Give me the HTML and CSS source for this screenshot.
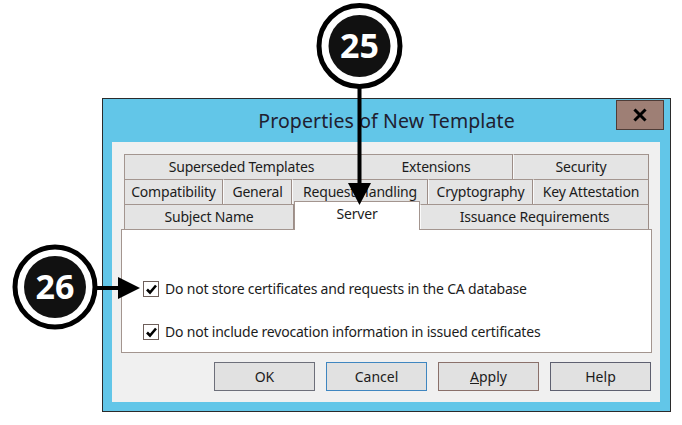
FILE: index.html
```html
<!DOCTYPE html>
<html>
<head>
<meta charset="utf-8">
<link rel="stylesheet" href="styles.css">
</head>
<body>
<div class="stage">
  <div class="window">
    <div class="titlebar">
      <div class="spacer"></div>
      <div class="title">Properties of New Template</div>
      <div class="close-wrap">
        <div class="close">
          <svg width="14" height="14" viewBox="0 0 14 14"><path d="M2.5 2.5 L11.5 11.5 M11.5 2.5 L2.5 11.5" stroke="#000" stroke-width="3" stroke-linecap="square"/></svg>
        </div>
      </div>
    </div>
    <div class="client">
      <div class="tabs">
        <div class="tabrow">
          <div class="tab t-superseded">Superseded Templates</div>
          <div class="tab t-extensions">Extensions</div>
          <div class="tab t-security">Security</div>
        </div>
        <div class="tabrow">
          <div class="tab t-compat">Compatibility</div>
          <div class="tab t-general">General</div>
          <div class="tab t-request">Request Handling</div>
          <div class="tab t-crypto">Cryptography</div>
          <div class="tab t-key">Key Attestation</div>
        </div>
        <div class="tabrow front">
          <div class="tab t-subject">Subject Name</div>
          <div class="tab t-server selected">Server</div>
          <div class="tab t-issuance">Issuance Requirements</div>
        </div>
      </div>
      <div class="panel">
        <label class="check">
          <span class="box"><svg width="13" height="13" viewBox="0 0 13 13"><path d="M2 6.5 L5 9.5 L11 2.5" fill="none" stroke="#000" stroke-width="2.6"/></svg></span>
          <span class="label">Do not store certificates and requests in the CA database</span>
        </label>
        <label class="check">
          <span class="box"><svg width="13" height="13" viewBox="0 0 13 13"><path d="M2 6.5 L5 9.5 L11 2.5" fill="none" stroke="#000" stroke-width="2.6"/></svg></span>
          <span class="label">Do not include revocation information in issued certificates</span>
        </label>
      </div>
      <div class="buttons">
        <div class="btn b-ok">OK</div>
        <div class="btn b-cancel">Cancel</div>
        <div class="btn b-apply"><u>A</u>pply</div>
        <div class="btn b-help">Help</div>
      </div>
    </div>
  </div>
  <svg class="overlay" width="682" height="425" viewBox="0 0 682 425">
    <rect x="357.5" y="86" width="4" height="100" fill="#000"/>
    <polygon points="348,183 371,183 359.5,205" fill="#000"/>
    <circle cx="359.5" cy="46" r="40.5" fill="#fff" stroke="#000" stroke-width="5"/>
    <circle cx="359.5" cy="46" r="31" fill="#111"/>
    <text x="359.5" y="58" class="num">25</text>
    <rect x="95" y="286" width="26" height="4" fill="#000"/>
    <polygon points="118,277 118,299 140,288" fill="#000"/>
    <circle cx="55" cy="287" r="40" fill="#fff" stroke="#000" stroke-width="5"/>
    <circle cx="55" cy="287" r="31" fill="#111"/>
    <text x="55" y="299" class="num">26</text>
  </svg>
</div>
</body>
</html>
```
FILE: styles.css
```css
html, body {
  margin: 0;
  padding: 0;
  background: #fff;
}
.stage {
  position: relative;
  width: 682px;
  height: 425px;
  overflow: hidden;
  font-family: "Noto Sans", "Open Sans", sans-serif;
  color: #1c1c1c;
}
.window {
  margin-left: 102px;
  margin-top: 98px;
  width: 569px;
  height: 314px;
  box-sizing: border-box;
  border: 1px solid #2b2b2b;
  background: #62c6e8;
  padding: 0 10px 9px 9px;
  display: flex;
  flex-direction: column;
}
.titlebar {
  height: 43px;
  display: grid;
  grid-template-columns: 1fr auto 1fr;
  margin: 0 -10px 0 -9px;
}
.title {
  font-size: 19.5px;
  line-height: 43px;
  color: #202030;
  letter-spacing: 0.1px;
}
.close-wrap {
  display: flex;
  justify-content: flex-end;
  align-items: flex-start;
  padding: 1px 6px 0 0;
}
.close {
  width: 48px;
  height: 30px;
  box-sizing: border-box;
  background: #9e7f75;
  border: 1px solid #4e3c37;
  display: flex;
  align-items: center;
  justify-content: center;
}
.client {
  flex: 1;
  background: #f0f0f0;
  padding: 12px 8px 0 9px;
  display: flex;
  flex-direction: column;
}
.tabs {
  margin-left: 3px;
  width: 525px;
  display: flex;
  flex-direction: column;
  position: relative;
  z-index: 1;
}
.tabrow {
  display: flex;
  height: 25px;
}
.tab {
  box-sizing: border-box;
  height: 25px;
  background: #e4e4e4;
  border-top: 1px solid #a3958f;
  border-left: 1px solid #fafafa;
  border-right: 1px solid #9c8d87;
  font-size: 14px;
  line-height: 23px;
  text-align: center;
  white-space: nowrap;
  letter-spacing: -0.2px;
}
.tabrow .tab:first-child {
  border-left: 1px solid #a3958f;
}
.t-superseded { width: 235px; }
.t-extensions { width: 154px; }
.t-security { width: 136px; }
.t-compat { width: 99px; }
.t-general { width: 69px; }
.t-request { width: 136px; }
.t-crypto { width: 105px; }
.t-key { width: 116px; }
.t-subject { width: 170px; }
.t-server { width: 126px; }
.t-issuance { width: 229px; }
.tab.selected {
  background: #fff;
  height: 29px;
  margin-top: -3px;
  border-left: 1px solid #a3958f;
  border-right: 1px solid #a3958f;
  line-height: 24px;
}
.panel {
  width: 531px;
  height: 124px;
  box-sizing: border-box;
  background: #fff;
  border: 1px solid #a3958f;
  padding: 51px 0 0 21px;
  display: flex;
  flex-direction: column;
  gap: 27px;
}
.check {
  display: flex;
  align-items: center;
  gap: 6px;
  height: 16px;
}
.box {
  width: 16px;
  height: 16px;
  box-sizing: border-box;
  border: 1px solid #6e5f5a;
  background: #fff;
  display: flex;
  align-items: center;
  justify-content: center;
}
.label {
  font-size: 14px;
  line-height: 16px;
  letter-spacing: -0.2px;
  white-space: nowrap;
}
.buttons {
  display: flex;
  justify-content: flex-end;
  gap: 11px;
  margin-top: 9px;
  padding-right: 1px;
}
.btn {
  width: 101px;
  height: 29px;
  box-sizing: border-box;
  background: #e1e1e1;
  border: 1px solid #777;
  font-size: 14px;
  line-height: 27px;
  text-align: center;
}
.b-ok { border-color: #6d6f7a; }
.b-cancel { border-color: #3f86c0; }
.b-apply { border-color: #8a706a; }
.b-help { border-color: #5e6070; }
.overlay {
  position: absolute;
  left: 0;
  top: 0;
  z-index: 5;
  pointer-events: none;
}
.num {
  font-family: "Open Sans", "Noto Sans", sans-serif;
  font-weight: 700;
  font-size: 34px;
  fill: #fff;
  text-anchor: middle;
}
```
